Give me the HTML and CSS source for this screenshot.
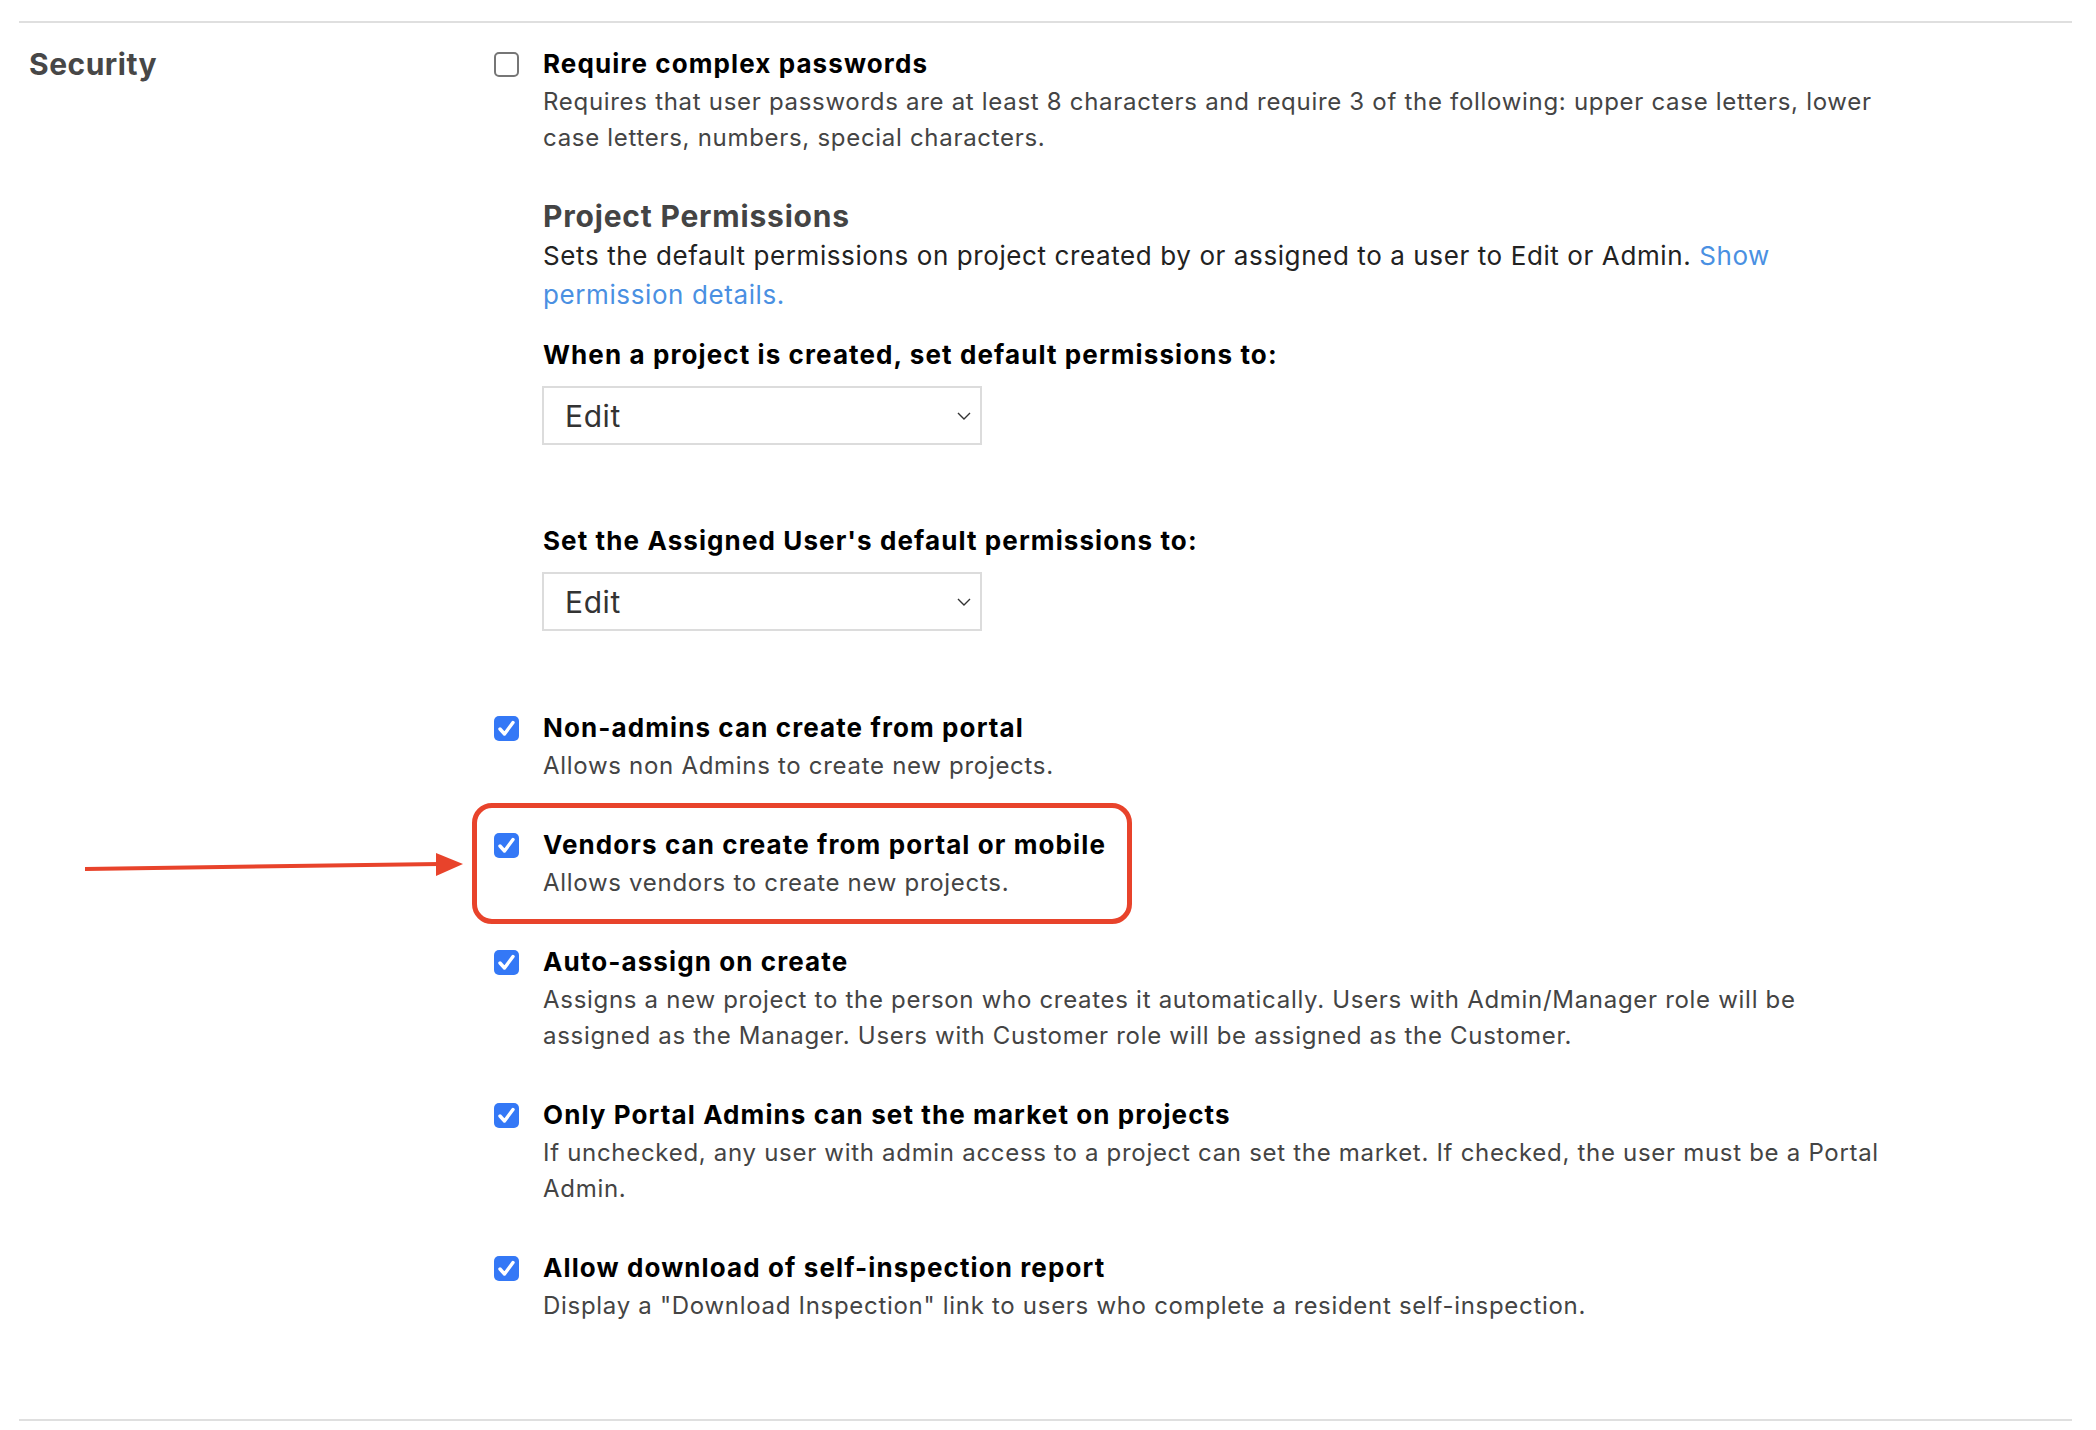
FILE: index.html
```html
<!DOCTYPE html>
<html lang="en">
<head>
<meta charset="utf-8">
<title>Security settings</title>
<link rel="stylesheet" href="styles.css">
</head>
<body>
<div class="page">
  <section class="settings">
    <h2 class="settings-title">Security</h2>
    <div class="settings-body">
      <div class="option">
        <span class="checkbox"></span>
        <div class="option-text">
          <div class="option-title">Require complex passwords</div>
          <p class="option-desc">Requires that user passwords are at least 8 characters and require 3 of the following: upper case letters, lower case letters, numbers, special characters.</p>
        </div>
      </div>

      <div class="perm">
        <h3 class="perm-title">Project Permissions</h3>
        <p class="perm-desc">Sets the default permissions on project created by or assigned to a user to Edit or Admin. <a class="link" href="#">Show permission details.</a></p>
        <div class="field">
          <div class="field-label">When a project is created, set default permissions to:</div>
          <div class="select"><span class="select-value">Edit</span><svg class="chevron" width="14" height="8" viewBox="0 0 14 8"><path d="M1 1 L7 7 L13 1" fill="none" stroke="#333" stroke-width="1.4"/></svg></div>
        </div>
        <div class="field field-next">
          <div class="field-label">Set the Assigned User's default permissions to:</div>
          <div class="select"><span class="select-value">Edit</span><svg class="chevron" width="14" height="8" viewBox="0 0 14 8"><path d="M1 1 L7 7 L13 1" fill="none" stroke="#333" stroke-width="1.4"/></svg></div>
        </div>
      </div>

      <div class="option option-after-perm">
        <span class="checkbox checked"><svg width="25" height="25" viewBox="0 0 25 25"><path d="M6 13 L10.5 18 L19 6.5" fill="none" stroke="#fff" stroke-width="3.4" stroke-linecap="round" stroke-linejoin="round"/></svg></span>
        <div class="option-text">
          <div class="option-title">Non-admins can create from portal</div>
          <p class="option-desc">Allows non Admins to create new projects.</p>
        </div>
      </div>

      <div class="option option-highlight">
        <span class="checkbox checked"><svg width="25" height="25" viewBox="0 0 25 25"><path d="M6 13 L10.5 18 L19 6.5" fill="none" stroke="#fff" stroke-width="3.4" stroke-linecap="round" stroke-linejoin="round"/></svg></span>
        <div class="option-text">
          <div class="option-title">Vendors can create from portal or mobile</div>
          <p class="option-desc">Allows vendors to create new projects.</p>
        </div>
      </div>

      <div class="option">
        <span class="checkbox checked"><svg width="25" height="25" viewBox="0 0 25 25"><path d="M6 13 L10.5 18 L19 6.5" fill="none" stroke="#fff" stroke-width="3.4" stroke-linecap="round" stroke-linejoin="round"/></svg></span>
        <div class="option-text">
          <div class="option-title">Auto-assign on create</div>
          <p class="option-desc">Assigns a new project to the person who creates it automatically. Users with Admin/Manager role will be assigned as the Manager. Users with Customer role will be assigned as the Customer.</p>
        </div>
      </div>

      <div class="option">
        <span class="checkbox checked"><svg width="25" height="25" viewBox="0 0 25 25"><path d="M6 13 L10.5 18 L19 6.5" fill="none" stroke="#fff" stroke-width="3.4" stroke-linecap="round" stroke-linejoin="round"/></svg></span>
        <div class="option-text">
          <div class="option-title">Only Portal Admins can set the market on projects</div>
          <p class="option-desc">If unchecked, any user with admin access to a project can set the market. If checked, the user must be a Portal Admin.</p>
        </div>
      </div>

      <div class="option">
        <span class="checkbox checked"><svg width="25" height="25" viewBox="0 0 25 25"><path d="M6 13 L10.5 18 L19 6.5" fill="none" stroke="#fff" stroke-width="3.4" stroke-linecap="round" stroke-linejoin="round"/></svg></span>
        <div class="option-text">
          <div class="option-title">Allow download of self-inspection report</div>
          <p class="option-desc">Display a "Download Inspection" link to users who complete a resident self-inspection.</p>
        </div>
      </div>
    </div>
  </section>

  <svg class="arrow" width="480" height="40" viewBox="0 0 480 40">
    <line x1="85" y1="28" x2="440" y2="23" stroke="#e8432b" stroke-width="4"/>
    <polygon points="436,12 463,23 436,35" fill="#e8432b"/>
  </svg>
</div>
</body>
</html>
```

FILE: styles.css
```css
* {
  box-sizing: border-box;
}

html,
body {
  margin: 0;
  background: #ffffff;
}

body {
  font-family: Inter, "Noto Sans", "Liberation Sans", sans-serif;
  color: #000;
}

.page {
  position: relative;
  padding: 21px 24px 0 19px;
}

.settings {
  display: flex;
  border-top: 2px solid #dfdfdf;
  border-bottom: 2px solid #dfdfdf;
  padding: 21px 0 95px;
}

.settings-title {
  flex: 0 0 475px;
  margin: 0;
  padding-left: 10px;
  font-size: 30px;
  letter-spacing: 0.5px;
  line-height: 40px;
  font-weight: 700;
  color: #474747;
}

.settings-body {
  flex: 0 0 1395px;
  display: flex;
  flex-direction: column;
}

.option {
  display: flex;
  gap: 24px;
  margin-top: 41px;
}

.option:first-child {
  margin-top: 0;
}

.option-after-perm {
  margin-top: 77px;
}

.checkbox {
  flex: 0 0 25px;
  width: 25px;
  height: 25px;
  margin-top: 8px;
  border: 2px solid #767676;
  border-radius: 5px;
  background: #fff;
}

.checkbox.checked {
  border: none;
  background: #3478f6;
}

.checkbox svg {
  display: block;
}

.option-text {
  flex: 1;
}

.option-title {
  font-size: 26px;
  letter-spacing: 1.1px;
  line-height: 40px;
  font-weight: 700;
  color: #000;
}

.option-desc {
  margin: 0;
  font-size: 24px;
  letter-spacing: 0.7px;
  line-height: 36px;
  color: #444;
}

.option-highlight {
  position: relative;
  align-self: flex-start;
}

.option-highlight::before {
  content: "";
  position: absolute;
  top: -22px;
  bottom: -23px;
  left: -22px;
  right: -26px;
  border: 5px solid #e8432b;
  border-radius: 20px;
  pointer-events: none;
}

.perm {
  margin-top: 40px;
  padding-left: 49px;
}

.perm-title {
  margin: 0;
  font-size: 30px;
  letter-spacing: 0.8px;
  line-height: 40px;
  font-weight: 700;
  color: #444;
}

.perm-desc {
  margin: 0;
  font-size: 26px;
  letter-spacing: 0.6px;
  line-height: 39px;
  color: #222;
}

.link {
  color: #4a90e2;
  text-decoration: none;
}

.field {
  margin-top: 21px;
}

.field-next {
  margin-top: 76px;
}

.field-label {
  font-size: 26px;
  letter-spacing: 1.1px;
  line-height: 40px;
  font-weight: 700;
  color: #000;
}

.select {
  display: flex;
  align-items: center;
  justify-content: space-between;
  width: 440px;
  height: 59px;
  margin-top: 11px;
  margin-left: -1px;
  padding: 0 9px 0 21px;
  border: 2px solid #dcdcdc;
  background: #fff;
}

.select-value {
  font-size: 30px;
  letter-spacing: 0.6px;
  color: #333;
}

.chevron {
  display: block;
}

.arrow {
  position: absolute;
  left: 0;
  top: 841px;
}
```
